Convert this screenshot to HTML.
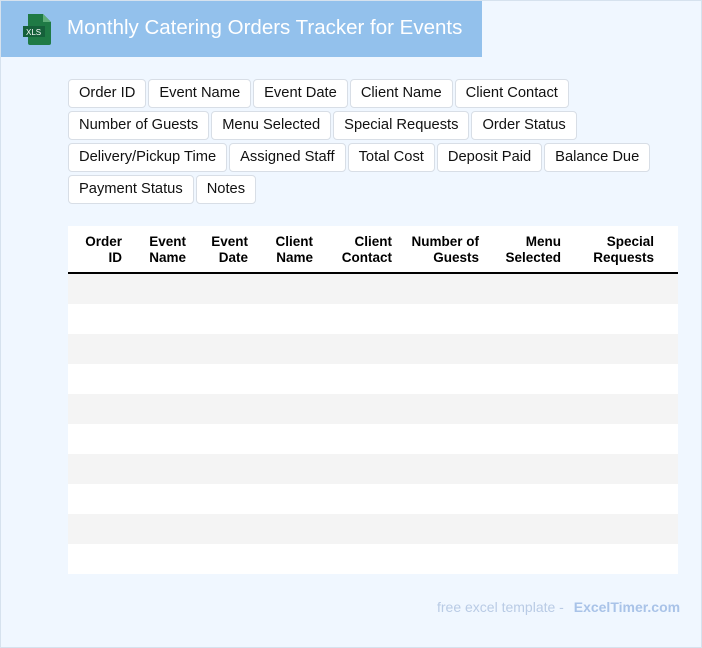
<!DOCTYPE html>
<html><head><style>
body{margin:0;width:702px;height:648px;background:#f0f7ff;font-family:"Liberation Sans",sans-serif;position:relative;overflow:hidden}
.frame{position:absolute;inset:0;border:1px solid #d6e2ee;box-sizing:border-box}
.hdr{position:absolute;left:1px;top:1px;width:481px;height:56px;background:#93c1ec}
.hdr .t{position:absolute;left:66px;top:15px;color:#fff;font-size:20.5px}
.tags{position:absolute;left:68px;top:79px;width:620px}
.tag{display:inline-block;box-sizing:border-box;height:29px;line-height:27px;padding:0 10px;margin:0 2px 3px 0;background:#fff;border:1px solid #d8dee6;border-radius:4px;font-size:14.7px;color:#111}
table{position:absolute;left:68px;top:226px;width:610px;border-collapse:collapse;background:#fff}
th{font-size:13.5px;font-weight:bold;text-align:right;padding:8px 8px 5px 0;height:33px;line-height:16px;border-bottom:2px solid #000;vertical-align:top}
td{height:30px;padding:0}
tr.g td{background:#f4f4f4}
.foot{position:absolute;left:437px;top:599px;font-size:14px;color:#b9cbe5}
.foot b{color:#a9c3e8;margin-left:6px}
</style></head><body>
<div class="frame"></div>
<div class="hdr">
<svg style="position:absolute;left:21px;top:13px" width="30" height="31" viewBox="0 0 30 31"><path d="M6 0h15l8 8v21a2 2 0 0 1-2 2H8a2 2 0 0 1-2-2z" fill="#1f7a45"/><path d="M21 0v8h8z" fill="#5fae7a"/><rect x="1" y="12" width="22" height="11" fill="#15603a"/><text x="4" y="21" font-size="8" fill="#fff" font-family="Liberation Sans">XLS</text></svg>
<div class="t">Monthly Catering Orders Tracker for Events</div></div>
<div class="tags">
<span class="tag">Order ID</span><span class="tag">Event Name</span><span class="tag">Event Date</span><span class="tag">Client Name</span><span class="tag">Client Contact</span><br>
<span class="tag">Number of Guests</span><span class="tag">Menu Selected</span><span class="tag">Special Requests</span><span class="tag">Order Status</span><br>
<span class="tag">Delivery/Pickup Time</span><span class="tag">Assigned Staff</span><span class="tag">Total Cost</span><span class="tag">Deposit Paid</span><span class="tag">Balance Due</span><br>
<span class="tag">Payment Status</span><span class="tag">Notes</span>
</div>
<table>
<tr><th style="width:0;padding:0 0 0 8px"></th><th style="width:46px">Order<br>ID</th><th style="width:56px">Event<br>Name</th><th style="width:54px">Event<br>Date</th><th style="width:57px">Client<br>Name</th><th style="width:71px">Client<br>Contact</th><th style="width:79px">Number of<br>Guests</th><th style="width:74px">Menu<br>Selected</th><th style="width:85px">Special<br>Requests</th><th></th></tr>
<tr class="g"><td colspan="10"></td></tr><tr><td colspan="10"></td></tr>
<tr class="g"><td colspan="10"></td></tr><tr><td colspan="10"></td></tr>
<tr class="g"><td colspan="10"></td></tr><tr><td colspan="10"></td></tr>
<tr class="g"><td colspan="10"></td></tr><tr><td colspan="10"></td></tr>
<tr class="g"><td colspan="10"></td></tr><tr><td colspan="10"></td></tr>
</table>
<div class="foot">free excel template - <b>ExcelTimer.com</b></div>
</body></html>
